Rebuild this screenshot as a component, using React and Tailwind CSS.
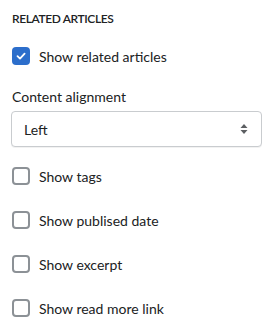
import { useState } from 'react';

function Checkbox({ label, checked, onChange }) {
  return (
    <label className="flex items-center gap-[9px] cursor-pointer h-[18px]">
      <span
        className={
          checked
            ? 'w-[18px] h-[18px] rounded-[4px] bg-[#2c6ecb] flex items-center justify-center shrink-0'
            : 'w-[18px] h-[18px] rounded-[4px] border-2 border-[#8c9196] bg-white shrink-0'
        }
      >
        {checked && (
          <svg width="12" height="12" viewBox="0 0 12 12" fill="none">
            <path d="M2.5 6.2 L5 8.6 L9.6 3.6" stroke="white" strokeWidth="1.8" strokeLinecap="round" strokeLinejoin="round" />
          </svg>
        )}
      </span>
      <input type="checkbox" className="hidden" checked={checked} onChange={onChange} />
      <span className="text-[14px] text-[#202223]">{label}</span>
    </label>
  );
}

export default function App() {
  const [opts, setOpts] = useState({
    related: true,
    tags: false,
    date: false,
    excerpt: false,
    more: false
  });

  const toggle = (key) => setOpts(prev => ({ ...prev, [key]: !prev[key] }));

  return (
    <div className="w-[275px] h-[333px] bg-white px-[12px] pt-[12px]" style={{ fontFamily: 'Lato, "Noto Sans", sans-serif' }}>
      <h3 className="text-[12px] font-semibold tracking-[-0.4px] text-[#202223] uppercase leading-[14px]">Related articles</h3>

      <div className="mt-[21px]">
        <Checkbox label="Show related articles" checked={opts.related} onChange={() => toggle('related')} />
      </div>

      <div className="mt-[23px] text-[14px] text-[#202223] leading-[18px]">Content alignment</div>

      <div className="relative mt-[5px] w-[251px] -ml-[1px]">
        <select className="w-full h-[36px] appearance-none rounded-[4px] border border-[#c9cccf] bg-white pl-[12px] pr-8 text-[14px] text-[#202223] outline-none shadow-[0_1px_0_rgba(0,0,0,0.05)]">
          <option>Left</option>
          <option>Center</option>
          <option>Right</option>
        </select>
        <svg className="absolute right-[14px] top-1/2 -translate-y-1/2 pointer-events-none" width="8" height="12" viewBox="0 0 8 12">
          <path d="M4 1 L7.5 5 H0.5 Z" fill="#5c5f62" />
          <path d="M4 11 L7.5 7 H0.5 Z" fill="#5c5f62" />
        </svg>
      </div>

      <div className="mt-[20px] flex flex-col gap-[26px]">
        <Checkbox label="Show tags" checked={opts.tags} onChange={() => toggle('tags')} />
        <Checkbox label="Show publised date" checked={opts.date} onChange={() => toggle('date')} />
        <Checkbox label="Show excerpt" checked={opts.excerpt} onChange={() => toggle('excerpt')} />
        <Checkbox label="Show read more link" checked={opts.more} onChange={() => toggle('more')} />
      </div>
    </div>
  );
}
